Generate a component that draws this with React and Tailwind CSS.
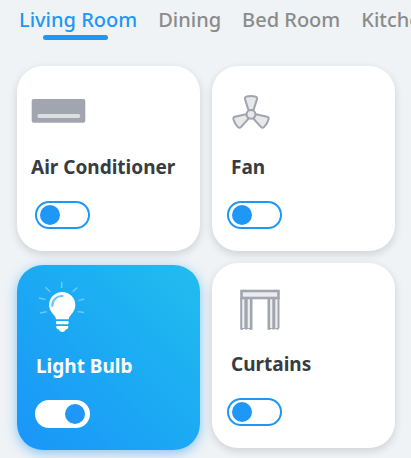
import { useState } from 'react';

const rooms = ['Living Room', 'Dining', 'Bed Room', 'Kitchen'];

function AirConditionerIcon() {
  return (
    <svg viewBox="0 0 56 56" className="w-14 h-14" aria-hidden="true">
      <rect x="0.7" y="17" width="53.6" height="23.7" rx="2" fill="#a1a5af" />
      <rect x="6.3" y="32" width="43" height="4" rx="2" fill="#dcdfdf" />
    </svg>
  );
}

function FanIcon() {
  const blade = 'M-2.6 -4.4 L-6 -15.2 Q-6.6 -17.2 -4 -17.8 Q0 -18.8 4 -17.8 Q6.6 -17.2 6 -15.2 L2.6 -4.4 Z';
  return (
    <svg viewBox="0 0 56 56" className="w-14 h-14" aria-hidden="true">
      <g transform="translate(25 32.3)" fill="#e8e8e9" stroke="#a1a5af" strokeWidth="2" strokeLinejoin="round">
        <path d={blade} />
        <path d={blade} transform="rotate(120)" />
        <path d={blade} transform="rotate(240)" />
        <circle r="4.4" />
      </g>
    </svg>
  );
}

function BulbIcon() {
  return (
    <svg viewBox="0 0 56 56" className="w-14 h-14" aria-hidden="true">
      <path
        d="M30.7 1v6M14.3 6.3l5 4.4M46.3 6.5l-4.6 4.2M8 17l6.5 1.6M53.3 18l-6 1.6M9 32l6.7-1.3M53 31.6l-6.3-1"
        stroke="#fff"
        strokeOpacity="0.35"
        strokeWidth="1.5"
        fill="none"
      />
      <path
        d="M31.2 11a13.1 13.1 0 0 1 13.1 13.1c0 4.2-1.8 6.9-4 9.4-1.6 1.8-2.3 2.7-2.5 4.8H25c-.3-2.1-1-3-2.6-4.8-2.2-2.5-4.3-5.2-4.3-9.4A13.1 13.1 0 0 1 31.2 11z"
        fill="#fff"
      />
      <path d="M21.3 25a9.6 9.6 0 0 1 10.2-10" stroke="#6fc6f5" strokeWidth="2.2" strokeLinecap="round" fill="none" />
      <rect x="25" y="40" width="12.6" height="3.2" rx="1" fill="#fff" />
      <path d="M25.2 45h12.2c0 2.2-.9 3.4-2.7 3.6-.6 1.6-1.5 2.4-3.4 2.4s-2.8-.8-3.4-2.4c-1.8-.2-2.7-1.4-2.7-3.6z" fill="#fff" />
    </svg>
  );
}

function CurtainsIcon() {
  return (
    <svg viewBox="0 0 56 56" className="w-14 h-14" aria-hidden="true">
      <path d="M14.2 19h12.3v31.5l-2.2.6-1.8-1.3-2.2 1-2.2-1-1.8 1.300-2.1-.6zM41.5 19h12v30l-2 2-1.800-1.200-2.200 1-2.200-1-1.800 1.300-2-.6z" fill="#a1a5af" />
      <path d="M17.3 20v29M22.800 20v29M45.200 20v29M50.400 20v29" stroke="#eeeeef" strokeWidth="2.200" />
      <rect x="15.500" y="12" width="37" height="7" fill="#ececee" stroke="#a1a5af" strokeWidth="2.600" />
    </svg>
  );
}

const columns = [
  {
    className: 'gap-3.5',
    toggle: 'ml-1',
    devices: [
      { id: 'ac', name: 'Air Conditioner', Icon: AirConditionerIcon, indent: '' },
      { id: 'bulb', name: 'Light Bulb', Icon: BulbIcon, indent: 'ml-[5px]' },
    ],
  },
  {
    className: 'gap-3',
    toggle: 'ml-px',
    devices: [
      { id: 'fan', name: 'Fan', Icon: FanIcon, indent: 'ml-[5px]' },
      { id: 'curtains', name: 'Curtains', Icon: CurtainsIcon, indent: 'ml-[5px]' },
    ],
  },
];

function DeviceCard({ device, on, onToggle, toggleClass }) {
  const { id, name, Icon, indent } = device;
  return (
    <div
      className={`flex flex-col items-start rounded-[26px] pt-4 px-3.5 pb-[22px] ${
        on
          ? 'bg-linear-to-tr from-[#1b95f8] to-[#22bdee] text-white shadow-[0_3px_12px_rgba(27,149,248,0.5)]'
          : 'bg-white text-[#363c41] shadow-[0_3px_8px_rgba(0,0,0,0.14)]'
      }`}
    >
      <Icon />
      <label htmlFor={id} className={`mt-[15px] text-[19px] leading-7 font-bold whitespace-nowrap ${indent}`}>
        {name}
      </label>
      <input
        id={id}
        type="checkbox"
        role="switch"
        checked={on}
        onChange={onToggle}
        className={`mt-5 flex items-center w-[55px] h-7 px-[3px] appearance-none rounded-full border-2 border-[#1e97f6] bg-white cursor-pointer before:block before:size-5 before:rounded-full before:bg-[#1e97f6] before:content-[''] checked:justify-end checked:border-white ${toggleClass}`}
      />
    </div>
  );
}

export default function App() {
  const [room, setRoom] = useState('Living Room');
  const [active, setActive] = useState({ bulb: true });

  return (
    <div className="min-h-screen overflow-hidden bg-[#eff3f6] font-['Noto_Sans','Open_Sans',sans-serif]">
      {/* Rooms */}
      <nav className="flex items-start gap-[21px] pt-1.5 pl-[19px] overflow-hidden">
        {rooms.map((r) => (
          <button
            key={r}
            type="button"
            onClick={() => setRoom(r)}
            className={`flex flex-col items-start shrink-0 text-[20px] leading-7 font-medium whitespace-nowrap cursor-pointer ${
              r === room ? 'text-[#1e97f6]' : 'text-[#8b8b8b]'
            }`}
          >
            {r}
            {r === room && <span className="mt-px ml-6 w-[65px] h-[5px] rounded-full bg-[#1e97f6]" />}
          </button>
        ))}
      </nav>

      {/* Devices */}
      <main className="grid grid-cols-2 gap-3 pt-[26px] pl-[17px] pr-4 pb-2">
        {columns.map((col) => (
          <div key={col.className} className={`flex flex-col ${col.className}`}>
            {col.devices.map((d) => (
              <DeviceCard
                key={d.id}
                device={d}
                on={!!active[d.id]}
                onToggle={() => setActive({ ...active, [d.id]: !active[d.id] })}
                toggleClass={col.toggle}
              />
            ))}
          </div>
        ))}
      </main>
    </div>
  );
}
